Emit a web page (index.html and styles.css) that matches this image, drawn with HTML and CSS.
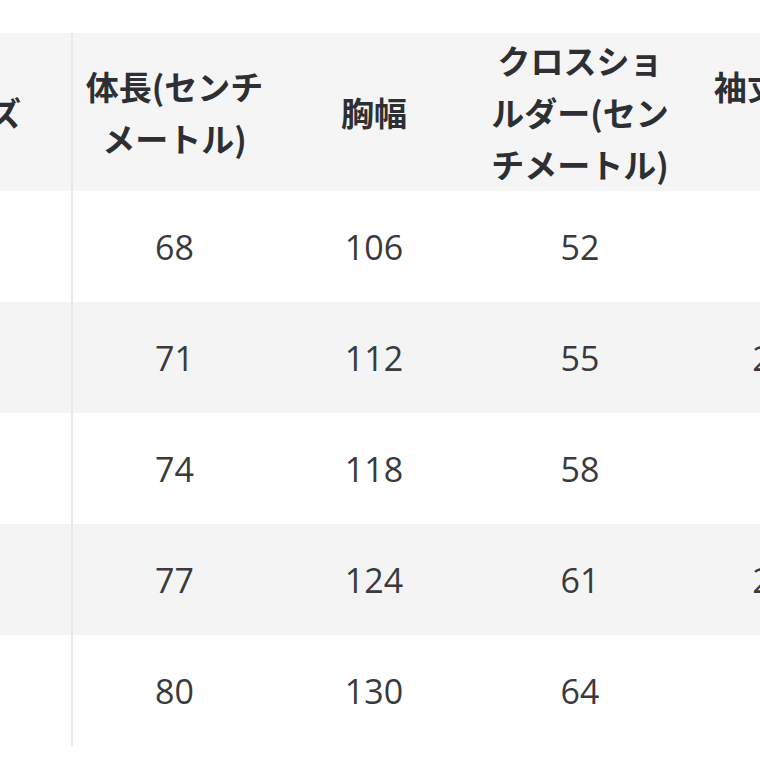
FILE: index.html
```html
<!DOCTYPE html>
<html lang="ja">
<head>
<meta charset="utf-8">
<link rel="stylesheet" href="styles.css">
<title>サイズ表</title>
</head>
<body>
<div class="scroller">
  <table class="size-table">
    <colgroup>
      <col class="c-size">
      <col class="c-length">
      <col class="c-chest">
      <col class="c-shoulder">
      <col class="c-sleeve">
    </colgroup>
    <thead>
      <tr>
        <th class="sticky">サイズ</th>
        <th>体長(センチメートル)</th>
        <th>胸幅</th>
        <th>クロスショルダー(センチメートル)</th>
        <th class="sleeve-head">袖丈(センチ)</th>
      </tr>
    </thead>
    <tbody>
      <tr><td class="sticky">S</td><td>68</td><td>106</td><td>52</td><td>20</td></tr>
      <tr class="alt"><td class="sticky">M</td><td>71</td><td>112</td><td>55</td><td>20.5</td></tr>
      <tr><td class="sticky">L</td><td>74</td><td>118</td><td>58</td><td>21</td></tr>
      <tr class="alt"><td class="sticky">XL</td><td>77</td><td>124</td><td>61</td><td>21.5</td></tr>
      <tr><td class="sticky">XXL</td><td>80</td><td>130</td><td>64</td><td>22</td></tr>
    </tbody>
  </table>
</div>
</body>
</html>
```

FILE: styles.css
```css
html, body {
  margin: 0;
  padding: 0;
  background: #ffffff;
}

.scroller {
  width: 760px;
  height: 760px;
  overflow: hidden;
  padding-top: 33px;
  box-sizing: border-box;
}

.size-table {
  margin-left: -127px;
  border-collapse: separate;
  border-spacing: 0;
  table-layout: fixed;
  width: 1011px;
  font-family: "Open Sans", "Noto Sans CJK JP", sans-serif;
  color: #3a3a3c;
}

.c-size { width: 200px; }
.c-length { width: 203px; }
.c-chest { width: 196px; }
.c-shoulder { width: 216px; }
.c-sleeve { width: 196px; }

.size-table th {
  background: #f5f5f6;
  font-family: "Noto Sans CJK JP", sans-serif;
  font-weight: 700;
  font-size: 33px;
  line-height: 52px;
  padding: 1px 11px;
  color: #2e2f33;
  text-align: center;
  vertical-align: middle;
}

.size-table th.sleeve-head {
  padding: 1px 19px;
}

.size-table td {
  height: 111px;
  padding: 0 11px;
  box-sizing: border-box;
  font-size: 34px;
  font-weight: 400;
  text-align: center;
  vertical-align: middle;
  background: #ffffff;
}

.size-table tr.alt td {
  background: #f4f4f5;
}

.size-table .sticky {
  border-right: 2px solid #e8e8ea;
}
```
